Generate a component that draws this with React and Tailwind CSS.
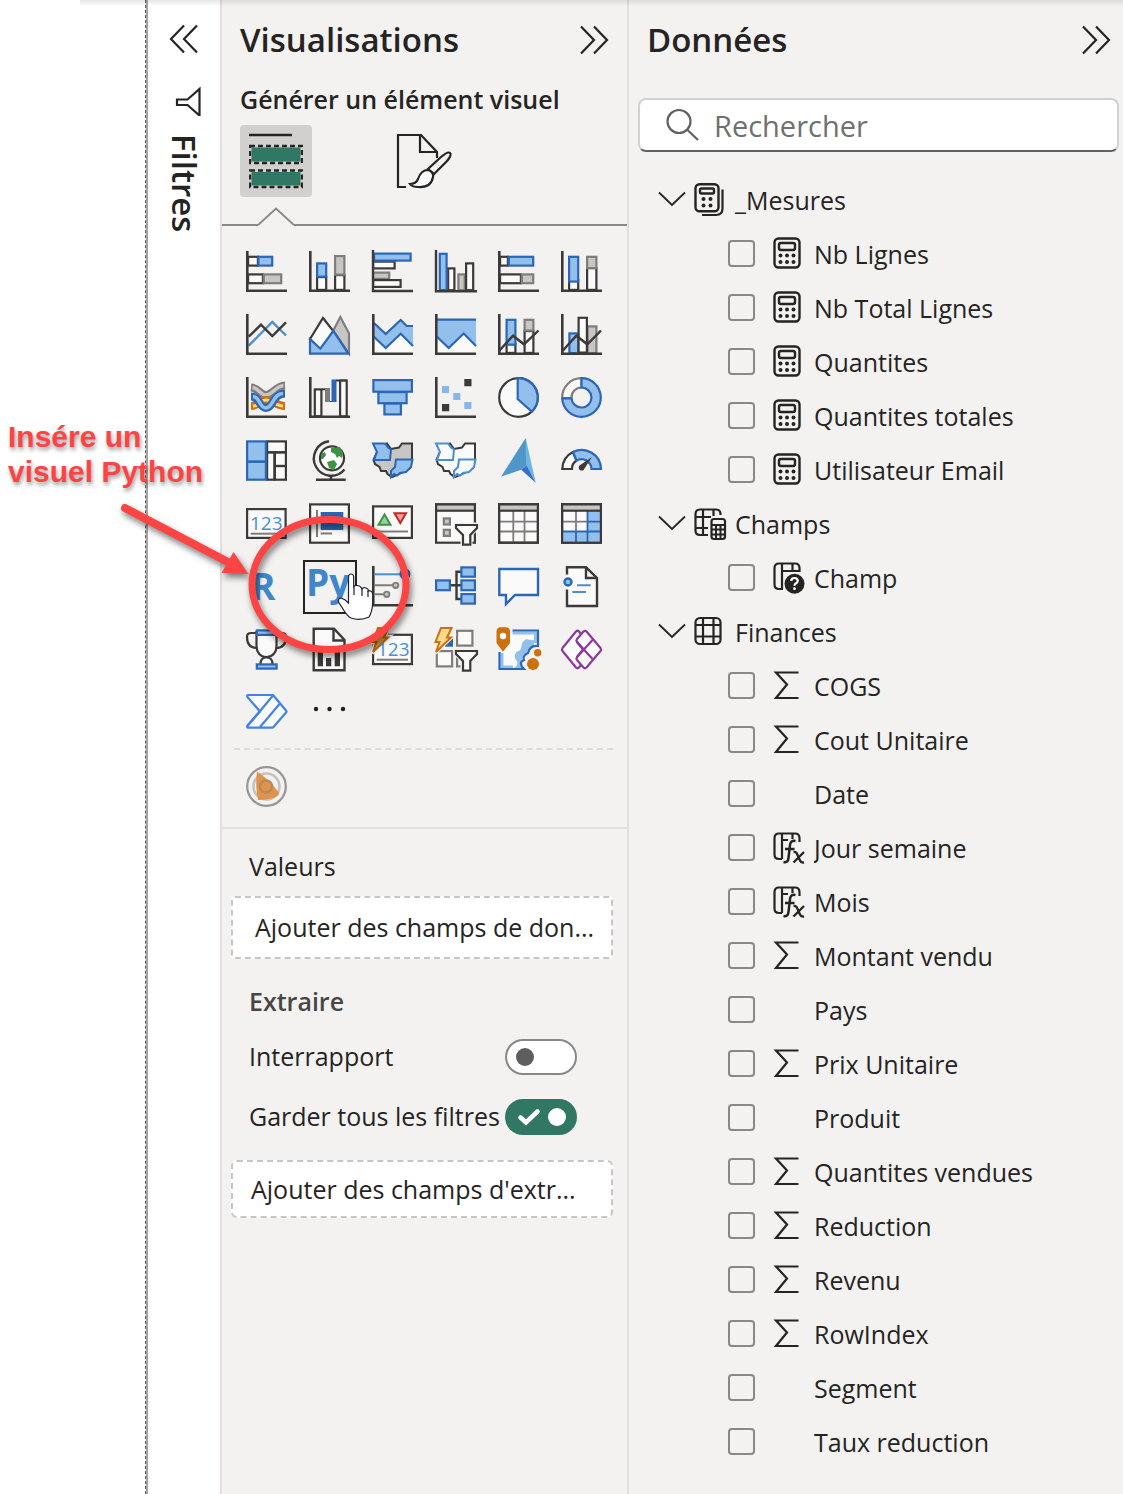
import React, { useState } from 'react';

// Palette shared by the chart icons
const K = '#3b3a39';
const B = '#2b67b5';
const L = '#92bfec';
const S = '#4a90d0';
const G = '#7f7d7b';
const C = '#c8c6c4';
const W = '#fafafa';
const BG = '#f3f2f1';

const Box = ({ x, y, w, h, s = K, f = W, sw = 2.2 }) => (
  <rect x={x + sw / 2} y={y + sw / 2} width={w - sw} height={h - sw} stroke={s} fill={f} strokeWidth={sw} />
);

const Axis = () => <path d="M1.3 0V39.7H41" stroke={K} strokeWidth="2.6" fill="none" />;

const Funnel = () => (
  <>
    <path d="M20 21H43V25L36 32V43H27V32L20 25Z" fill={BG} stroke={BG} strokeWidth="3" />
    <path d="M21 22H42V25L35.3 32V41.7H28V32L21 25Z" fill={W} stroke={K} strokeWidth="2.2" />
  </>
);

const Bolt = ({ fill, stroke }) => (
  <>
    <path d="M5-2H17L12.5 7.5H17L0 24L3.5 13.5H-1Z" fill={BG} stroke={BG} strokeWidth="4" />
    <path d="M6-1H16.5L12 8.5H16L1 23L4.5 13H.5Z" fill={fill} stroke={stroke} strokeWidth="2" />
  </>
);

const Digits = ({ x, y }) => (
  <text x={x} y={y} fill={S} fontSize="19" fontFamily="'Open Sans', sans-serif">123</text>
);

const Ohio = ({ stroke, fill, rest }) => (
  <>
    <path d="M15 3.5L19 9L27 7.5L30 3.5H40V20L38 28L29 33L20 37L15.5 34L14 31H9L7.5 27L3 24L1.5 19.5L5 12Z" fill={rest} stroke={K} strokeWidth="2" />
    <path d="M1 3.5H13L16.5 8L19 9.5L18 20H2L5 12Z" fill={fill} stroke={stroke} strokeWidth="2" />
    <path d="M40.5 19.5H24L23 27L19 31V37L22 34L25 35.5L28 33L34 32L39 27Z" fill={fill} stroke={stroke} strokeWidth="2" />
  </>
);

const visuals = [
  ['Graphique à barres empilées', <>
    <Box x={1} y={4.7} w={12} h={11} /><Box x={11.3} y={4.7} w={16} h={11} s={B} f={L} />
    <Box x={1} y={22.3} w={17} h={11} /><Box x={16.7} y={22.3} w={19.6} h={11} s={G} f={C} /><Axis />
  </>],
  ['Histogramme empilé', <>
    <Box x={7} y={25} w={11.3} h={15} /><Box x={7} y={11.3} w={11.3} h={15.5} s={B} f={L} />
    <Box x={25} y={23} w={11.5} h={17} /><Box x={25} y={4} w={11.5} h={20.7} s={G} f={C} /><Axis />
  </>],
  ['Graphique à barres groupées', <>
    <Box x={0} y={9.5} w={23.7} h={9} /><Box x={0} y={20.5} w={18.3} h={8.5} s={G} f={C} />
    <Box x={0} y={28} w={29.7} h={9} /><Box x={1} y={1.5} w={38.7} h={9.2} s={B} f={L} />
    <path d="M1-1V40H41" stroke={K} strokeWidth="2.4" fill="none" />
  </>],
  ['Histogramme groupé', <>
    <Box x={12} y={16.3} w={8.5} h={24} /><Box x={22.3} y={22.3} w={8.5} h={18} s={G} f={C} />
    <Box x={30} y={11.3} w={9.3} h={29} /><Box x={3.7} y={1.7} w={9} h={38.5} s={B} f={L} />
    <path d="M1-1V40.3H42" stroke={K} strokeWidth="2.4" fill="none" />
  </>],
  ['Graphique à barres empilées 100 %', <>
    <Box x={1} y={4.7} w={10} h={11} /><Box x={9.7} y={4.7} w={26.6} h={11} s={B} f={L} />
    <Box x={1} y={22.3} w={23} h={11} /><Box x={22.7} y={22.3} w={13.6} h={11} s={G} f={C} /><Axis />
  </>],
  ['Histogramme empilé 100 %', <>
    <Box x={7} y={28} w={11.3} h={12} /><Box x={7} y={4.7} w={11.3} h={27} s={B} f={L} />
    <Box x={25} y={16} w={11.5} h={24} /><Box x={25} y={4.7} w={11.5} h={13.5} s={G} f={C} /><Axis />
  </>],
  ['Graphique en courbes', <>
    <path d="M2.7 31.7L26.3 8L40 21.5" stroke={S} strokeWidth="2.4" fill="none" />
    <path d="M2.7 22.7L15 10.7L26.3 22L40 8.3" stroke={K} strokeWidth="2.4" fill="none" /><Axis />
  </>],
  ['Graphique en aires', <>
    <path d="M1 25L14 4L24.3 17L12 36Z" fill={W} stroke={K} strokeWidth="2.2" />
    <path d="M24.3 16.5L31.3 3L40 19.3V39.5Z" fill={C} stroke={G} strokeWidth="2.2" />
    <path d="M1 39.7V25.3L11.3 34.7L24.3 17L39.3 39.7Z" fill={L} stroke={B} strokeWidth="2.2" />
  </>],
  ['Graphique en aires empilées', <>
    <path d="M2 22L13.7 34L28.7 19.7L41 32V39H2Z" fill={W} />
    <path d="M2 9L13.7 20L28.7 6L34.7 12H41V32L28.7 19.7L13.7 34L2 22.7Z" fill={L} />
    <path d="M2 9L13.7 20L28.7 6L34.7 12H41M2 22.7L13.7 34L28.7 19.7L41 32" stroke={B} strokeWidth="2.2" fill="none" /><Axis />
  </>],
  ['Graphique en aires empilées 100 %', <>
    <path d="M2 5H41V39H2Z" fill={W} />
    <path d="M2 5.5H41V32L28.7 19.5L13.7 34L2 22.7Z" fill={L} />
    <path d="M2 5.7H41M2 22.7L13.7 34L28.7 19.5L41 32" stroke={B} strokeWidth="2.2" fill="none" /><Axis />
  </>],
  ['Graphique en courbes et histogramme empilé', <>
    <Box x={7.5} y={29} w={11} h={11} /><Box x={7.5} y={4.7} w={11} h={27} s={B} f={L} />
    <Box x={25.5} y={16} w={11} h={24} /><Box x={25.5} y={4.7} w={11} h={13} s={G} f={C} /><Axis />
    <path d="M1 37L15 21.7L26 30.3L40.5 16.5" stroke={K} strokeWidth="2.4" fill="none" />
  </>],
  ['Graphique en courbes et histogramme groupé', <>
    <Box x={7.3} y={18.3} w={11} h={22} s={B} f={L} /><Box x={25.5} y={11.3} w={11} h={29} s={G} f={C} />
    <Box x={16.5} y={2.7} w={10.5} h={37} /><Axis />
    <path d="M1.5 37L15.3 21.7L26.3 30.3L40 16.5" stroke={K} strokeWidth="2.4" fill="none" />
  </>],
  ['Graphique de ruban', <>
    <path d="M5 10.5C13 11 14 18 20 18S30 9 39 8.5" stroke={G} strokeWidth="8" fill="none" />
    <path d="M6.5 10.5C13 11 14 18 20 18S30 9 37.5 8.5" stroke={C} strokeWidth="3.6" fill="none" />
    <path d="M5 29C13 29 14 23 20 23S31 29 39 29" stroke="#d06f10" strokeWidth="8" fill="none" />
    <path d="M7 29C13 29 14 23 20 23S31 29 37 29" stroke="#fbd67f" strokeWidth="3" fill="none" />
    <path d="M5 19.5C14 19.5 13 31 20 31S27 16.5 39 16.5" stroke={B} strokeWidth="8" fill="none" />
    <path d="M7 19.5C14 19.5 13 31 20 31S27 16.5 37 16.5" stroke={L} strokeWidth="3.6" fill="none" /><Axis />
  </>],
  ['Graphique en cascade', <>
    <Box x={4.7} y={11.3} w={8.8} h={29} /><path d="M13 12.3H21" stroke={K} strokeWidth="2" />
    <path d="M16 11.3H21V25H16Z" fill={G} /><path d="M21 24.5H27" stroke={K} strokeWidth="1" />
    <path d="M22.5 2.5H27.5V25H22.5Z" fill={B} /><path d="M27 3.5H38" stroke={K} strokeWidth="2" />
    <Box x={30} y={2.5} w={8.8} h={38} /><Axis />
  </>],
  ['Entonnoir', <>
    <Box x={0.3} y={2} w={40.7} h={13.8} s={B} f={L} /><Box x={5.3} y={14} w={30.4} h={13.3} s={B} f={L} />
    <Box x={11.3} y={25.5} w={18.7} h={13} s={B} f={L} />
  </>],
  ['Nuage de points', <>
    <path d="M29.3 2H36.5V9.2H29.3ZM7 27H14.2V34.2H7Z" fill={K} />
    <path d="M7 9H14V16H7ZM18.3 16H25.3V23H18.3ZM29.3 25H36.5V32H29.3Z" fill="#86b8ea" /><Axis />
  </>],
  ['Graphique en secteurs', <>
    <circle cx="20.5" cy="20.5" r="19.3" fill={W} stroke={K} strokeWidth="2.2" />
    <path d="M19.7 1.2A19.3 19.3 0 0 1 33.7 34.5L19.7 22Z" fill={L} stroke={B} strokeWidth="2.2" />
  </>],
  ['Graphique en anneau', <>
    <path d="M1.2 21A19.3 19.3 0 0 1 20.5 1.2V10.5A10 10 0 0 0 10.5 21Z" fill={W} stroke={G} strokeWidth="2.2" />
    <path d="M20.5 1.2A19.3 19.3 0 1 1 1.2 21.5H10.5A10 10 0 1 0 20.5 10.5Z" fill={L} stroke={B} strokeWidth="2.2" />
  </>],
  ['Treemap', <>
    <Box x={20} y={0.3} w={21} h={13} /><Box x={20} y={11.5} w={9.5} h={29.3} />
    <Box x={27.8} y={11.5} w={13.2} h={15.5} /><Box x={27.8} y={25} w={13.2} h={15.8} />
    <Box x={0} y={0.3} w={21} h={22.4} s={B} f={L} /><Box x={0} y={20.7} w={21} h={20.1} s={B} f={L} />
  </>],
  ['Carte', <>
    <circle cx="23" cy="18.3" r="12" fill="#fff" stroke={K} strokeWidth="2.2" />
    <path d="M22 8L31 7L34 13L33 18L30 16L28 18L26 14L22 12ZM18 22L25 20L28 24L25 30L20 28ZM12 14L16 12L17 15L14 19L12 19Z" fill="#3f9244" />
    <path d="M20 1.3A17.3 17.3 0 1 0 35.5 29.5" stroke={K} strokeWidth="2.4" fill="none" />
    <path d="M22 35V39M7 39.7H36.7" stroke={K} strokeWidth="2.6" />
  </>],
  ['Carte choroplèthe', <Ohio stroke={B} fill={L} rest={C} />],
  ['Carte de formes', <Ohio stroke={S} fill={W} rest={W} />],
  ['Azure Maps', <>
    <path d="M27.7-2L3 36.7L23.3 29.7L30 24Z" fill="#4f97c9" />
    <path d="M27.7-2L37.7 42.7L28 26Z" fill="#6fb7e2" />
    <path d="M23.3 29.7L28.5 25.5L37.7 42.7Z" fill="#3470c9" />
  </>],
  ['Jauge', <>
    <path d="M1.3 29A19.4 19.4 0 0 1 12 12L15.5 20.5A10 10 0 0 0 11 29Z" fill={W} stroke={K} strokeWidth="2.2" />
    <path d="M12 12A19.4 19.4 0 0 1 40 29H30.5A10 10 0 0 0 15.5 20.5Z" fill={L} stroke={B} strokeWidth="2.2" />
    <path d="M18.5 25.5L31 17L23.5 28.5A3 3 0 1 1 18.5 25.5Z" fill={K} />
  </>],
  ['Carte (nombre)', <>
    <Box x={0} y={5} w={40.7} h={31} /><Digits x={4} y={27} />
    <path d="M4.7 30.7H35.7" stroke={G} strokeWidth="2" />
  </>],
  ['Carte à plusieurs lignes', <>
    <Box x={0} y={0.3} w={41} h={40.5} /><path d="M8 7V34M11.7 30.5H23" stroke={G} strokeWidth="2" />
    <path d="M11.7 9H34.3V17H11.7ZM11.7 20H34.3V27H11.7Z" fill={B} />
  </>],
  ['Indicateur de performance clé', <>
    <Box x={0} y={2.3} w={41} h={33.7} />
    <path d="M12.5 11.5L6.5 21.7H18.5Z" fill="#9ad29a" stroke="#3f9244" strokeWidth="2" />
    <path d="M22.5 10.3H34L28.3 20Z" fill="#f3a0a0" stroke="#c02a2a" strokeWidth="2" />
    <path d="M4.7 28.5H36" stroke={G} strokeWidth="2" />
  </>],
  ['Segment', <>
    <Box x={0} y={0.3} w={41} h={40.5} /><Box x={0} y={0.3} w={41} h={8.5} f={C} />
    <Box x={7.7} y={14.3} w={8.3} h={8.3} s={G} f={C} /><Box x={7.7} y={25.7} w={8.3} h={8.3} s={G} f={C} /><Funnel />
  </>],
  ['Table', <>
    <Box x={0} y={0.3} w={41} h={40.5} /><path d="M15.3 8V40M26.5 8V40M1 18.7H40M1 28.5H40" stroke={G} strokeWidth="1.8" />
    <Box x={0} y={0.3} w={41} h={40.5} f="none" /><Box x={0} y={0.3} w={41} h={8.5} f={C} />
  </>],
  ['Matrice', <>
    <Box x={0} y={0.3} w={41} h={40.5} /><path d="M26.5 8H40V40H1V28.5H26.5Z" fill={L} />
    <path d="M15 8V28M1 18.7H26" stroke={G} strokeWidth="1.8" />
    <path d="M26.5 8V40M1 28.5H40M15 28.5V40M26.5 18.7H40" stroke={B} strokeWidth="1.8" />
    <Box x={0} y={0.3} w={41} h={40.5} f="none" /><Box x={0} y={0.3} w={41} h={8.5} f={C} />
  </>],
  ['Visuel de script R', <text x="5" y="34" fill="#3f87ca" fontSize="37" fontWeight="700" fontFamily="'Open Sans', sans-serif">R</text>],
  ['Visuel Python', <text x="-3" y="30" fill="#3f87ca" fontSize="37" fontWeight="700" fontFamily="'Open Sans', sans-serif">Py</text>],
  ['Influenceurs clés', <>
    <path d="M1.3 0V39.3H41" stroke={K} strokeWidth="2.6" fill="none" />
    <path d="M2.5 8.3H30" stroke={S} strokeWidth="2" /><circle cx="33" cy="8" r="5.5" fill={B} />
    <path d="M2.5 19.3H21M2.5 28.3H12" stroke={G} strokeWidth="2" />
    <circle cx="23.7" cy="19.3" r="2.7" fill={C} stroke={G} strokeWidth="1.8" />
    <circle cx="14.7" cy="28.3" r="2.7" fill={C} stroke={G} strokeWidth="1.8" />
  </>],
  ['Arborescence de décomposition', <>
    <path d="M16 19.3H26M26 5.7H21.5V33H26" stroke={K} strokeWidth="2.4" fill="none" />
    <Box x={0} y={13.3} w={16} h={12} s={B} f={L} /><Box x={25.3} y={0.3} w={15.7} h={11.5} s={B} f={L} />
    <Box x={25.3} y={13.3} w={15.7} h={12} s={B} f={L} /><Box x={25.3} y={27} w={15.7} h={11.7} s={B} f={L} />
  </>],
  ['Questions et réponses', <path d="M1.3 3H40V29H17L8 38V29H1.3Z" fill={W} stroke={B} strokeWidth="2.4" />],
  ['Narration', <>
    <path d="M6 1.3H25L36 12V40H6Z" fill={W} />
    <path d="M6 8.5V1.3H25L36 12V40H6V23.5M25 1.3V12H36" fill="none" stroke={K} strokeWidth="2.4" />
    <circle cx="7" cy="16" r="3.5" fill={L} stroke={B} strokeWidth="2.4" />
    <path d="M16 19.3H29.7M11.3 26H25" stroke={S} strokeWidth="2" />
  </>],
  ['Objectifs', <>
    <path d="M10 4H5C2 4 1 5 1 8C1 15 4 19 11 19M31 4H36C39 4 40 5 40 8C40 15 37 19 30 19" fill="none" stroke={K} strokeWidth="2.2" />
    <path d="M10.5 3V17C10.5 23 14 28 20.5 28S30.5 23 30.5 17V3Z" fill={W} stroke={K} strokeWidth="2.2" />
    <path d="M14.5 35C14.5 31 16.5 28.5 20.5 28.5S26.5 31 26.5 35" fill={W} stroke={K} strokeWidth="2.2" />
    <Box x={9.7} y={0.3} w={21.6} h={6.7} s={B} f={L} /><Box x={9.7} y={34.3} w={22} h={6.4} s={B} f={L} />
  </>],
  ['Rapport paginé', <>
    <path d="M4.7-.3H25L35.5 11V41.3H4.7Z" fill={W} stroke={K} strokeWidth="2.4" />
    <path d="M24.5-.3V11.5H35.5" fill="none" stroke={K} strokeWidth="2.4" />
    <path d="M8.7 20H14V37.3H8.7ZM17 29H22.3V37.3H17ZM25.7 23H31V37.3H25.7Z" fill={K} />
  </>],
  ['Carte (nouvelle)', <>
    <Box x={0} y={4.7} w={41} h={31.5} /><path d="M4.7 30.7H36" stroke={G} strokeWidth="2" />
    <Bolt fill="#f0a040" stroke="#c8690c" /><Digits x={5} y={27} />
  </>],
  ['Segment (nouveau)', <>
    <Box x={10} y={9} w={8} h={8.7} s={B} f={B} />
    <Box x={21} y={0.7} w={17.5} h={17} s={G} /><Box x={0.7} y={21} w={17.5} h={17.5} s={G} />
    <Box x={21} y={21} w={14} h={17.5} s={G} /><Funnel /><Bolt fill="#fbdc8c" stroke="#d06f10" />
  </>],
  ['ArcGIS Maps', <>
    <path d="M14.5 1.5H40V17L33 20C28 24 31 29 25 32L26 40H1.5V23Z" fill={W} />
    <path d="M26 12C28 8 32 12 36 11V18L30 22L25 28L22 33L24 39H16C19 37 21 34 18 31C15 27 18 22 21 22C25 20 22 14 26 12Z" fill={L} />
    <path d="M14.5 4H37.5V14M4 24V38H15" fill="none" stroke={L} strokeWidth="3" />
    <path d="M14.5 1.5H40V17C34 16 31 20 30 24C26 26 25 29 26 31C21 33 23 37 26 40H1.5V23" fill="none" stroke={B} strokeWidth="2.2" />
    <path d="M2-1.7H8C10.5-1.7 12 0 12 2.5V14L5 22.7L-1.5 14V2.5C-1.5 0 0-1.7 2-1.7Z" fill="#cf700f" />
    <circle cx="5" cy="7" r="3.2" fill="#fff" />
    <circle cx="39.7" cy="23.7" r="3.7" fill="#cf700f" /><circle cx="35" cy="35" r="6" fill="#cf700f" />
  </>],
  ['Power Apps', <g fill={W} stroke="#8b3a9c" strokeWidth="2.2" strokeLinejoin="round">
    <path d="M15 2.5L1.5 19Q.5 20.5 1.5 22L15 38.5Q16.5 40 18 38.5L31 22Q32 20.5 31 19L18 2.5Q16.5 1 15 2.5Z" />
    <path d="M22.5 2.5L16 10Q15 11.5 16 13L22 20.5L16 28Q15 29.5 16 31L22.5 38.5Q24 40 25.5 38.5L39.5 22Q40.5 20.5 39.5 19L25.5 2.5Q24 1 22.5 2.5Z" />
    <path d="M16 13L31.5 30M16 28L32 10.5" fill="none" />
  </g>],
  ['Power Automate', <g fill={W} stroke="#4383e6" strokeWidth="2.2" strokeLinejoin="round">
    <path d="M2 3H27L40 18.5Q41 19.5 40 20.5L27.5 35Q27 35.7 26 35.7H2Q.5 35.3 1.5 33.5L14 19.5L1.5 5Q.5 3.3 2 3Z" />
    <path d="M27 3.5L1.5 34M34 11.5L14 35" fill="none" />
  </g>],
  ['Obtenir plus de visuels', <g fill="#201f1e"><circle cx="7" cy="17" r="2.2" /><circle cx="20.5" cy="17" r="2.2" /><circle cx="34" cy="17" r="2.2" /></g>],
];

const icons = {
  calc: (
    <g fill="none" stroke="#252423" strokeWidth="2.4">
      <rect x="1.5" y="1.5" width="25" height="29" rx="4" /><rect x="6" y="6" width="16" height="7" rx="2" />
      <g fill="#252423" stroke="none">
        <circle cx="7.5" cy="18.5" r="2" /><circle cx="14" cy="18.5" r="2" /><circle cx="20.5" cy="18.5" r="2" />
        <circle cx="7.5" cy="25" r="2" /><circle cx="14" cy="25" r="2" /><circle cx="20.5" cy="25" r="2" />
      </g>
    </g>
  ),
  calcStack: (
    <g fill="none" stroke="#252423" strokeWidth="2.4">
      <rect x="1.5" y="1.2" width="23" height="27" rx="4" /><rect x="6" y="5.5" width="14" height="5" rx="1.5" />
      <path d="M28.5 6.5V25.5C28.5 29.5 26.5 32 22 32H8" strokeWidth="2.2" />
      <g fill="#252423" stroke="none">
        <circle cx="9.5" cy="16" r="2" /><circle cx="16.5" cy="16" r="2" />
        <circle cx="9.5" cy="22.5" r="2" /><circle cx="16.5" cy="22.5" r="2" />
      </g>
    </g>
  ),
  table: (
    <g fill="none" stroke="#252423" strokeWidth="2.2">
      <rect x="1.5" y="3" width="25" height="26" rx="4.5" />
      <path d="M9 3V29M19.5 3V29M1.5 10H26.5M1.5 21.5H26.5" />
    </g>
  ),
  tableCalc: (
    <g fill="none" stroke="#252423" strokeWidth="2.2">
      <path d="M14 28H6Q1.5 28 1.5 23.500V7Q1.5 2.5 6 2.5H22Q26.5 2.5 26.5 7V8" />
      <path d="M9 2.5V28M19.5 2.5V9M1.5 10H17M1.5 21H14" />
      <rect x="17.5" y="12" width="13.5" height="20" rx="2.5" fill={BG} />
      <path d="M17 18H31M17 22.5H31M17 27.5H31M22 18V32M26.5 18V32" strokeWidth="2" />
    </g>
  ),
  question: (
    <g fill="none" stroke="#252423" strokeWidth="2.2">
      <path d="M10 28H6Q1.5 28 1.5 23.5V7Q1.5 2.5 6 2.5H22Q26.5 2.5 26.5 7V11" />
      <path d="M9 2.5V28M19.5 2.5V10M9 10H26" />
      <circle cx="21.5" cy="22.7" r="10" fill="#252423" stroke="none" />
      <path d="M18.3 20Q18.3 17 21.5 17T24.7 19.8Q24.7 21.5 22.8 22.5Q21.5 23.300 21.5 24.7" stroke="#fff" />
      <circle cx="21.5" cy="27.7" r="1.4" fill="#fff" stroke="none" />
    </g>
  ),
  fx: (
    <g fill="none" stroke="#252423" strokeWidth="2.2">
      <path d="M9 28H6Q1.5 28 1.5 23.5V7Q1.5 2.5 6 2.5H22Q26.5 2.5 26.5 7V11" />
      <path d="M9 2.5V28M19.5 2.5V8M9 9H15" />
      <path d="M22.5 10Q17.5 9 17 14L15.5 27Q15 32 10.5 31M12 18H21.5" strokeWidth="2.5" />
      <path d="M20.5 21Q23.5 20.5 24.5 24L27 29.5Q28 32 31 31.5M31 21L20.5 31.5" strokeWidth="2.3" />
    </g>
  ),
  sum: <path d="M25.5 3.5H3L14 15.5L3 29H25.5" fill="none" stroke="#252423" strokeWidth="2.2" />,
};

const tables = [
  { name: '_Mesures', icon: 'calcStack', fields: [['Nb Lignes', 'calc'], ['Nb Total Lignes', 'calc'], ['Quantites', 'calc'], ['Quantites totales', 'calc'], ['Utilisateur Email', 'calc']] },
  { name: 'Champs', icon: 'tableCalc', fields: [['Champ', 'question']] },
  {
    name: 'Finances',
    icon: 'table',
    fields: [
      ['COGS', 'sum'], ['Cout Unitaire', 'sum'], ['Date', null], ['Jour semaine', 'fx'], ['Mois', 'fx'],
      ['Montant vendu', 'sum'], ['Pays', null], ['Prix Unitaire', 'sum'], ['Produit', null],
      ['Quantites vendues', 'sum'], ['Reduction', 'sum'], ['Revenu', 'sum'], ['RowIndex', 'sum'],
      ['Segment', null], ['Taux reduction', null],
    ],
  },
];

function Chevrons({ left }) {
  return (
    <svg width="30" height="30" viewBox="0 0 30 30" fill="none" stroke="#252423" strokeWidth="2.2">
      {left ? <path d="M15 1.5L2 15L15 28.5M28 1.5L15 15L28 28.5" /> : <path d="M2 1.5L15 15L2 28.5M15 1.5L28 15L15 28.5" />}
    </svg>
  );
}

function Toggle({ id, label, defaultChecked }) {
  const [on, setOn] = useState(defaultChecked);
  return (
    <div className="flex h-[60px] w-[328px] items-center justify-between">
      <label htmlFor={id} className="whitespace-nowrap">{label}</label>
      <div className="relative h-9 w-[72px] shrink-0">
        <input
          id={id}
          type="checkbox"
          role="switch"
          checked={on}
          onChange={(e) => setOn(e.target.checked)}
          className="block h-9 w-[72px] appearance-none rounded-full border-2 border-[#8a8886] bg-white checked:border-[#317864] checked:bg-[#317864]"
        />
        <svg className="pointer-events-none absolute inset-0" width="72" height="36" viewBox="0 0 72 36">
          {on ? (
            <>
              <path d="M15.5 18.5L21 23.5L32.5 12.5" fill="none" stroke="#fff" strokeWidth="4.5" strokeLinecap="round" />
              <circle cx="52" cy="18" r="9" fill="#fff" />
            </>
          ) : <circle cx="20" cy="18" r="9" fill="#605e5c" />}
        </svg>
      </div>
    </div>
  );
}

function FiltersPane() {
  return (
    <aside className="flex w-[74px] shrink-0 flex-col items-center border-r-2 border-[#e1dfdd] bg-white pt-6">
      <button aria-label="Développer les filtres"><Chevrons left /></button>
      <svg className="mt-8" width="36" height="30" viewBox="0 0 36 30" fill="none" stroke="#252423" strokeWidth="2.2">
        <path d="M33.5 3V29.5L21.5 19H11V13.5H21.500Z" />
      </svg>
      <h2 className="mt-[18px] text-[33px] leading-9 font-semibold [writing-mode:vertical-rl]">Filtres</h2>
    </aside>
  );
}

function VisualsPane() {
  const [selected, setSelected] = useState('Visuel Python');

  return (
    <section className="w-[407px] shrink-0 border-r-2 border-[#e1dfdd]">
      <header className="flex h-20 items-center justify-between px-[18px]">
        <h2 className="text-[33px] font-semibold">Visualisations</h2>
        <button aria-label="Réduire les visualisations"><Chevrons /></button>
      </header>
      <h3 className="px-[18px] leading-[38px] font-semibold whitespace-nowrap">Générer un élément visuel</h3>

      {/* Build / format tabs */}
      <div className="mt-[7px] flex gap-[76px] px-[18px]">
        <button aria-label="Générer un élément visuel" className="flex size-[72px] items-center justify-center rounded bg-[#d2d0ce]">
          <svg width="54" height="56" viewBox="0 0 54 56">
            <path d="M0 2H43" stroke="#252423" strokeWidth="2.5" />
            <path d="M1 13H53V30H1ZM1 37.5H53V54H1Z" fill="#317864" stroke="#d2d0ce" strokeWidth="3" />
            <path d="M1 13H53V30H1ZM1 37.5H53V54H1Z" fill="none" stroke="#252423" strokeWidth="2.4" strokeDasharray="5 3" />
          </svg>
        </button>
        <button aria-label="Mettre en forme" className="flex size-[72px] items-center justify-center">
          <svg width="56" height="56" viewBox="0 0 56 56" fill="none" stroke="#252423" strokeWidth="2.2">
            <path d="M10 54H2V2H25L41 19V25M24 2V19H41" />
            <path d="M54 20Q56 22 51 28L38 41L32 36L45 24Q52 18 54 20Z" />
            <path d="M32 37Q38 39 37 44Q35 55 22 54Q16 54 14 51Q20 51 22 46Q25 37 32 37Z" fill="#fafafa" />
          </svg>
        </button>
      </div>
      <div className="mt-[10px] flex items-end">
        <div className="h-0.5 w-9 bg-[#8a8886]" />
        <svg width="36" height="19" viewBox="0 0 36 19" fill="none" stroke="#8a8886" strokeWidth="2"><path d="M0 18L18 1.5L36 18" /></svg>
        <div className="h-0.5 flex-1 bg-[#8a8886]" />
      </div>

      <div className="mt-[19px] grid grid-cols-[repeat(6,54px)] gap-[9px] px-[18px]">
        {visuals.map(([name, art]) => (
          <button
            key={name}
            aria-label={name}
            onClick={() => setSelected(name)}
            className={`flex size-[54px] items-center justify-center border-2 ${selected === name ? 'border-[#252423]' : 'border-transparent'}`}
          >
            <svg width="42" height="42" viewBox="0 0 42 42" className="shrink-0 overflow-visible">{art}</svg>
          </button>
        ))}
      </div>

      <div className="mt-2 mr-[14px] ml-3 border-t-2 border-dashed border-[#dddbd9]" />
      <div className="border-b-2 border-[#e1dfdd] px-[18px] pt-[10px] pb-[13px]">
        <button aria-label="Visuel personnalisé" className="flex size-[54px] items-center justify-center">
          <svg width="42" height="42" viewBox="0 0 42 42" fill="none">
            <circle cx="20.5" cy="20.5" r="19.3" stroke="#989694" strokeWidth="2.2" />
            <circle cx="20.5" cy="20.5" r="13" stroke="#c4c2c0" strokeWidth="2.5" />
            <path d="M11 5.5Q24 14 33 27Q33 33 12 34Q9 20 11 5.5Z" fill="#e0934a" />
            <circle cx="20" cy="20.5" r="6" stroke="#b98a58" strokeWidth="2.5" />
          </svg>
        </button>
      </div>

      <div className="pt-[13px] pr-[14px] pl-[9px]">
        <h3 className="px-[18px] leading-[48px]">Valeurs</h3>
        <div className="mt-[6px] truncate rounded border-2 border-dashed border-[#c8c6c4] bg-white px-2 pl-[22px] leading-[59px]">Ajouter des champs de don...</div>
        <h3 className="mt-[18px] px-[18px] leading-[48px] font-semibold text-[#484644]">Extraire</h3>
        <div className="px-[18px] pt-[2px]">
          <Toggle id="inter" label="Interrapport" defaultChecked={false} />
          <Toggle id="keep" label="Garder tous les filtres" defaultChecked />
        </div>
        <div className="mt-[13px] truncate rounded-md border-2 border-dashed border-[#c8c6c4] bg-white px-[18px] leading-[54px]">Ajouter des champs d'extr...</div>
      </div>
    </section>
  );
}

function DataPane() {
  const [closed, setClosed] = useState([]);
  const flip = (name) => setClosed(closed.includes(name) ? closed.filter((n) => n !== name) : [...closed, name]);

  return (
    <section className="min-w-0 flex-1">
      <header className="flex h-20 items-center justify-between pr-3 pl-[18px]">
        <h2 className="text-[33px] font-semibold">Données</h2>
        <button aria-label="Réduire les données"><Chevrons /></button>
      </header>
      <div className="mt-[18px] mr-1 ml-[9px] flex h-[54px] items-center rounded-lg border-2 border-[#d1d1d1] border-b-[#616161] bg-white pl-[26px]">
        <svg width="34" height="34" viewBox="0 0 34 34" fill="none" stroke="#616161" strokeWidth="2.2" className="shrink-0">
          <circle cx="13" cy="13.5" r="11.5" /><path d="M21 21.5L32 32" />
        </svg>
        <input type="search" aria-label="Rechercher" placeholder="Rechercher" className="ml-[14px] min-w-0 flex-1 pt-0.5 text-[29px] outline-none placeholder:text-[#707070]" />
      </div>

      <ul className="mt-5 pb-6">
        {tables.map((table) => (
          <li key={table.name}>
            <button onClick={() => flip(table.name)} aria-expanded={!closed.includes(table.name)} className="flex h-[54px] w-full items-center pl-[29px] text-left">
              <svg width="28" height="16" viewBox="0 0 28 16" fill="none" stroke="#252423" strokeWidth="1.8"><path d="M1 1.5L14 14L27 1.5" /></svg>
              <svg width="33" height="33" viewBox="0 0 33 33" className="ml-2 shrink-0 overflow-visible">{icons[table.icon]}</svg>
              <span className="ml-2 pt-1">{table.name}</span>
            </button>
            {!closed.includes(table.name) && (
              <ul>
                {table.fields.map(([field, icon]) => (
                  <li key={field}>
                    <label className="flex h-[54px] items-center pl-[99px]">
                      <input type="checkbox" className="size-[27px] shrink-0 appearance-none rounded border-2 border-[#8a8886] checked:bg-[#317864]" />
                      <svg width="33" height="33" viewBox="0 0 33 33" className="ml-[18px] shrink-0 overflow-visible">{icon && icons[icon]}</svg>
                      <span className="ml-2 truncate pt-1">{field}</span>
                    </label>
                  </li>
                ))}
              </ul>
            )}
          </li>
        ))}
      </ul>
    </section>
  );
}

// Red callout drawn over the panes, pointing at the Python visual
function Callout() {
  return (
    <div className="pointer-events-none absolute top-0 left-0">
      <svg width="430" height="670" viewBox="0 0 430 670" className="absolute top-0 left-0">
        <path
          d="M348.5 602V577Q348.5 574 351 574T353.7 577V587.5Q354 585 357.5 585.5T362 589Q363 587 366 588T368 591Q372 590 372.7 594V604Q372 612 369 617Q360 621 351 618Q347 616 343 609L338.5 602Q338 598 341 598Q345 599 348.5 603Z"
          fill="#fff" stroke="#201f30" strokeWidth="1.2"
        />
        <path d="M354 587V595M362 589V596M368 591V597" stroke="#201f30" strokeWidth="1.2" />
        <g className="drop-shadow-[2px_4px_3px_rgba(0,0,0,0.5)]">
          <ellipse cx="329" cy="584.5" rx="77" ry="65" fill="none" stroke="#fd4444" strokeWidth="7" />
          <path d="M125 508L228 562" stroke="#fd4444" strokeWidth="8" strokeLinecap="round" />
          <path d="M233.5 552L221.5 573L248.5 574Z" fill="#fd4444" />
        </g>
      </svg>
      <p className="absolute top-[419px] left-2 font-['Liberation_Sans',sans-serif] text-[30px] leading-[35px] font-bold whitespace-nowrap text-[#fd4444] [text-shadow:1px_3px_4px_rgba(0,0,0,0.4)]">
        Insére un<br />visuel Python
      </p>
    </div>
  );
}

export default function App() {
  return (
    <div className="relative flex min-h-screen bg-[#f3f2f1] font-['Open_Sans','Noto_Sans',sans-serif] text-[25px] text-[#252423]">
      <main className="w-[148px] shrink-0 border-r-2 border-[#a6a4a2] bg-white">
        <div className="h-full border-r border-dashed border-[#605e5c]" />
      </main>
      <FiltersPane />
      <VisualsPane />
      <DataPane />
      <div className="pointer-events-none absolute top-0 right-0 left-20 h-[6px] bg-linear-to-b from-black/10 to-transparent" />
      <Callout />
    </div>
  );
}
